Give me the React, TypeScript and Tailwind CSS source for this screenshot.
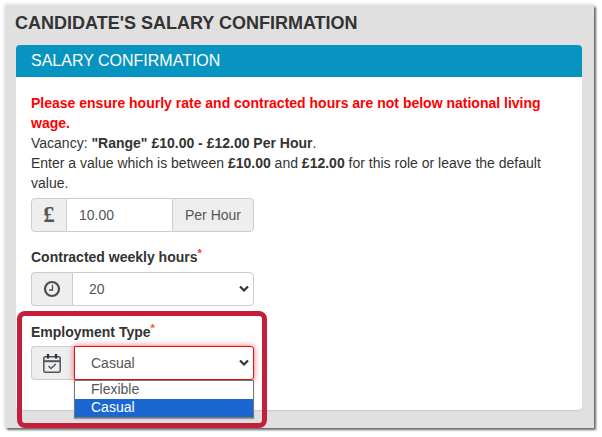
const Clock = () => (
  <svg width="18" height="18" viewBox="0 0 18 18" fill="none" stroke="#4d4d4d" strokeWidth="2.2">
    <circle cx="9" cy="9" r="7" />
    <path d="M9.5 4.8V10H6" strokeWidth="1.3" />
  </svg>
);

const Calendar = () => (
  <svg width="20" height="21" viewBox="0 0 20 21" fill="none" stroke="#4a5560" strokeWidth="1.5">
    <rect x="1.8" y="3.8" width="16.4" height="15.4" rx="1.5" />
    <path d="M2 8.2H18" strokeWidth="2" />
    <path d="M6 1V5.5M14 1V5.5" strokeWidth="2.4" stroke="#333" />
    <path d="M6.5 13L9 15.5L13.8 11" strokeWidth="1.4" />
  </svg>
);

const Chevron = () => (
  <svg className="absolute right-[4px] top-1/2 -translate-y-1/2" width="10" height="7" viewBox="0 0 10 7" fill="none" stroke="#333" strokeWidth="2.2">
    <path d="M1 1L5 5L9 1" />
  </svg>
);

const addonClass = "flex items-center justify-center bg-[#eeeeee] border border-[#cccccc] text-[#555555]";

export default function App() {
  return (
    <div className="w-[602px] h-[437px] bg-white pt-[5px] pl-[5px] font-['Liberation_Sans',Arial,sans-serif] text-[14px] text-[#333333]">
      <div className="relative w-[589px] h-[423px] bg-[#e0e0e0] px-[11px] shadow-[2px_2px_2px_rgba(0,0,0,0.55),0_0_4px_rgba(0,0,0,0.2)]">
        <h1 className="h-[40px] pt-[7px] -ml-[1px] text-[18px] leading-[22px] font-bold text-[#333333]">CANDIDATE'S SALARY CONFIRMATION</h1>

        <div className="w-[566px] h-[365px] bg-white rounded-[4px] shadow-[0_1px_1px_rgba(0,0,0,0.1)]">
          <div className="h-[32px] bg-[#0894c0] rounded-t-[4px] px-[15px] text-[16px] leading-[31px] text-white">SALARY CONFIRMATION</div>

          <div className="px-[15px] pt-[16px]">
            <p className="leading-[20px] font-bold text-[#ff0000]">Please ensure hourly rate and contracted hours are not below national living wage.</p>
            <p className="leading-[20px]">Vacancy: <b>"Range" £10.00 - £12.00 Per Hour</b>.</p>
            <p className="leading-[20px]">Enter a value which is between <b>£10.00</b> and <b>£12.00</b> for this role or leave the default value.</p>

            <div className="mt-[5px] flex w-[223px] h-[34px]">
              <div className={`${addonClass} w-[36px] rounded-l-[4px] font-['Liberation_Serif',serif] text-[23px] font-bold`}>£</div>
              <div className="flex-1 border-y border-[#cccccc] pl-[12px] leading-[32px] text-[#555555]">10.00</div>
              <div className={`${addonClass} w-[82px] rounded-r-[4px]`}>Per Hour</div>
            </div>

            <div className="mt-[15px] h-[23px] font-bold leading-[20px]">
              Contracted weekly hours<sup className="text-[#ff3030] font-bold text-[11px] leading-none">*</sup>
            </div>
            <div className="mt-[2px] flex w-[223px] h-[34px]">
              <div className={`${addonClass} w-[41px] rounded-l-[4px] border-r-0`}><Clock /></div>
              <div className="relative flex-1 border border-[#cccccc] rounded-r-[4px] pl-[16px] leading-[32px] text-[#555555]">
                20
                <Chevron />
              </div>
            </div>

            <div className="mt-[16px] h-[23px] font-bold leading-[20px]">
              Employment Type<sup className="text-[#ff5a20] font-bold text-[11px] leading-none">*</sup>
            </div>
            <div className="mt-[1px] flex w-[223px] h-[34px]">
              <div className={`${addonClass} w-[43px] rounded-l-[4px] border-r-0 pr-[2px]`}><Calendar /></div>
              <div className="relative flex-1 bg-white border border-[#e01010] rounded-r-[3px] pl-[16px] leading-[32px] text-[#555555] shadow-[0_0_6px_rgba(225,40,40,0.7)]">
                Casual
                <Chevron />
              </div>
            </div>
          </div>
        </div>

        {/* open select list */}
        <div className="absolute left-[69px] top-[375px] w-[180px] border border-[#767676] bg-white text-[14px] text-[#555555] shadow-[0_1px_1px_rgba(0,0,0,0.3)]">
          <div className="h-[18px] pl-[16px] leading-[16px]">Flexible</div>
          <div className="h-[18px] pl-[16px] leading-[16px] bg-[#1a67d2] text-white">Casual</div>
        </div>

        {/* highlight box */}
        <div className="absolute left-[12px] top-[306px] w-[250px] h-[117px] border-[5px] border-[#c41e3a] rounded-[8px]" />
      </div>
    </div>
  );
}
